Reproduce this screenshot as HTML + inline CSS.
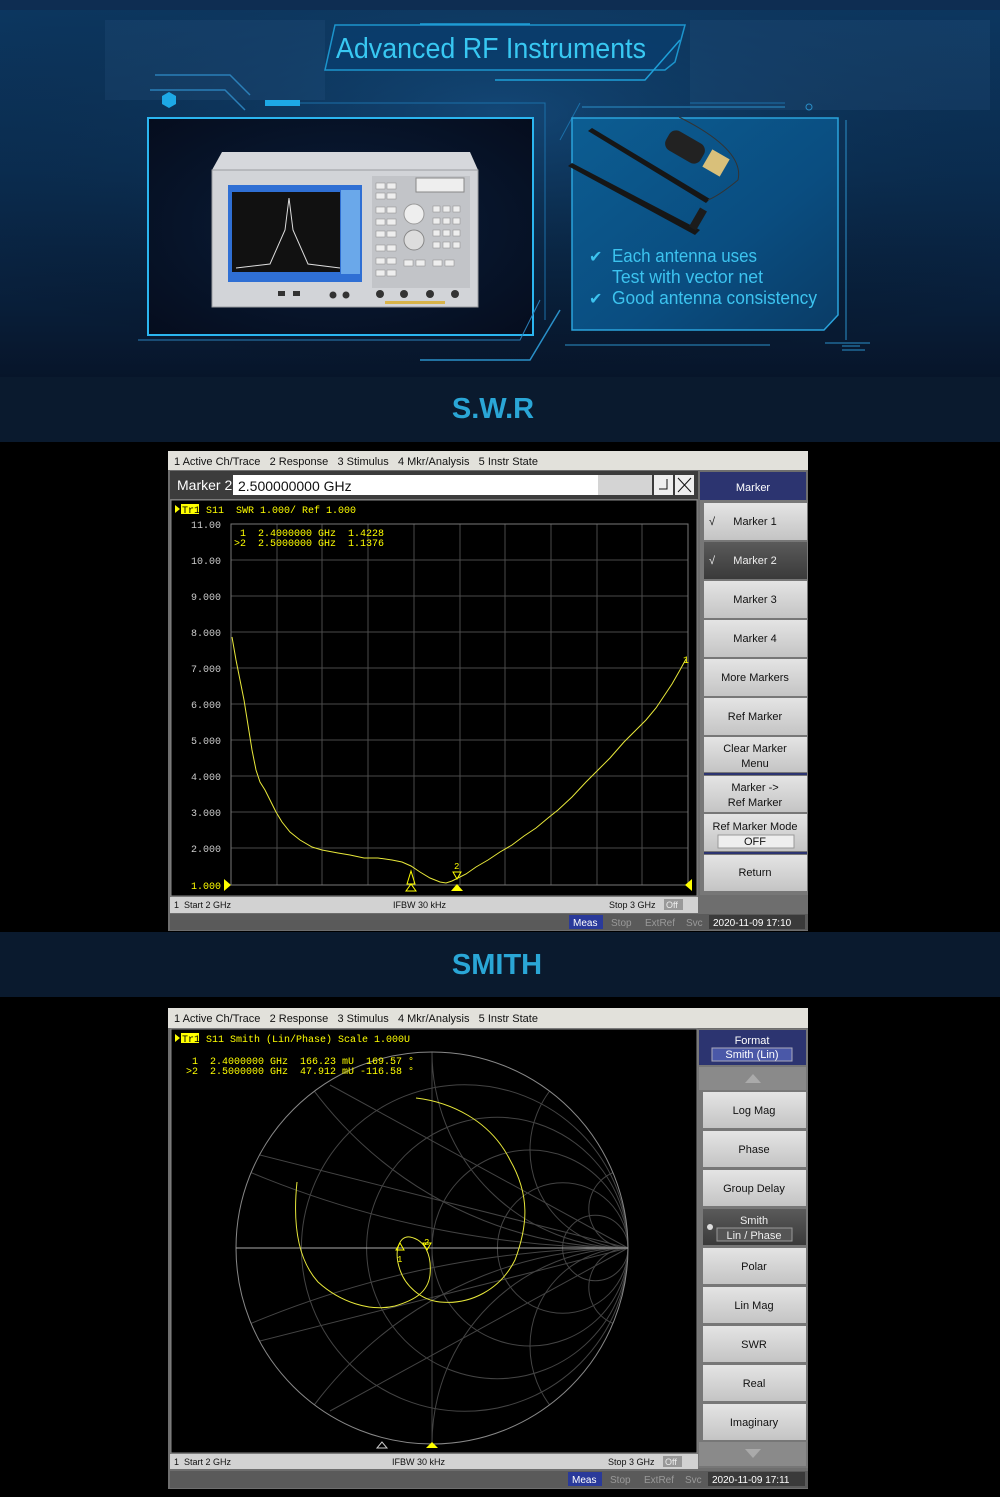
<!DOCTYPE html>
<html><head><meta charset="utf-8"><style>
html,body{margin:0;padding:0;background:#000;width:1000px;height:1497px;overflow:hidden;}
svg{display:block}
text{white-space:pre}
.s{font-family:"Liberation Sans",sans-serif}
.m{font-family:"Liberation Mono",monospace}
</style></head><body>
<svg width="1000" height="1497" viewBox="0 0 1000 1497" xmlns="http://www.w3.org/2000/svg" xml:space="preserve">
<defs>
<linearGradient id="bg" x1="0" y1="0" x2="0" y2="1">
<stop offset="0" stop-color="#0d3b68"/><stop offset="0.45" stop-color="#0b2f55"/><stop offset="1" stop-color="#07152a"/>
</linearGradient>
<radialGradient id="bg2" cx="0.5" cy="0.3" r="0.7"><stop offset="0" stop-color="#1a5a90" stop-opacity="0.5"/><stop offset="1" stop-color="#000" stop-opacity="0"/></radialGradient>
<linearGradient id="rb" x1="0" y1="0" x2="1" y2="1"><stop offset="0" stop-color="#0c5d92"/><stop offset="0.6" stop-color="#0a4d80"/><stop offset="1" stop-color="#0a3c66"/></linearGradient>
<radialGradient id="lb" cx="0.5" cy="0.5" r="0.7"><stop offset="0" stop-color="#0a1e3a"/><stop offset="1" stop-color="#050d1e"/></radialGradient>
<linearGradient id="btn" x1="0" y1="0" x2="0" y2="1"><stop offset="0" stop-color="#e4e4e4"/><stop offset="1" stop-color="#c4c4c4"/></linearGradient>
<linearGradient id="btnd" x1="0" y1="0" x2="0" y2="1"><stop offset="0" stop-color="#5a5a5a"/><stop offset="1" stop-color="#3a3a3a"/></linearGradient>
<clipPath id="sc"><circle cx="432" cy="1248" r="196"/></clipPath>
</defs>

<!-- banner -->
<rect x="0" y="0" width="1000" height="377" fill="url(#bg)"/>
<rect x="0" y="0" width="1000" height="377" fill="url(#bg2)"/>
<rect x="0" y="0" width="1000" height="10" fill="#0e2d52"/>
<g fill="#3a6d9c" opacity="0.15">
<rect x="105" y="20" width="220" height="80"/><rect x="690" y="20" width="300" height="90"/>
</g>
<!-- title frame -->
<path d="M335 25 L685 25 L675 62 L665 70 L325 70 Z" fill="#0a3d6c" stroke="#1e9fd8" stroke-width="1.5" opacity="0.9"/>
<text x="336" y="58" textLength="310" lengthAdjust="spacingAndGlyphs" class="s" font-size="29" fill="#38c8f2">Advanced RF Instruments</text>
<path d="M420 24 L530 24 M495 80 L560 80 L645 80 L680 40" stroke="#1e9fd8" stroke-width="1.5" fill="none"/>
<path d="M150 90 L225 90 L245 110 M155 75 L230 75 L250 95" stroke="#2a7fb8" stroke-width="1.5" fill="none"/>
<polygon points="169,92 176,96 176,104 169,108 162,104 162,96" fill="#1da8e6"/>
<path d="M270 103 L545 103 L545 320 M690 103 L785 103 M580 103 L560 140" stroke="#1b6fa8" stroke-width="1" fill="none"/>
<rect x="265" y="100" width="35" height="6" fill="#1da8e6"/>
<!-- left box -->
<rect x="148" y="118" width="385" height="217" fill="url(#lb)" stroke="#2bb6f0" stroke-width="2"/>
<path d="M138 340 L520 340 L540 300" stroke="#2a7fb8" fill="none"/>
<path d="M420 360 L530 360 L560 310" stroke="#2a90c8" stroke-width="1.5" fill="none"/>
<!-- instrument -->
<polygon points="222,152 470,152 478,170 212,170" fill="#d6d8dc"/>
<rect x="212" y="170" width="266" height="137" fill="#d2d4d8" stroke="#9a9ca0"/>
<rect x="228" y="185" width="134" height="97" fill="#2f6fd4"/>
<rect x="232" y="192" width="108" height="80" fill="#111"/>
<rect x="341" y="190" width="19" height="84" fill="#6aa8ea"/>
<path d="M236 268 L270 264 L285 230 L289 198 L293 230 L308 264 L340 268" stroke="#ddd" stroke-width="1" fill="none"/>
<rect x="372" y="176" width="98" height="112" fill="#c2c4c8"/>
<rect x="416" y="178" width="48" height="14" fill="#eee" stroke="#888"/>
<circle cx="414" cy="214" r="10" fill="#eee" stroke="#999"/>
<circle cx="414" cy="240" r="10" fill="#ddd" stroke="#888"/>
<g fill="#eee" stroke="#888" stroke-width="0.5">
<rect x="376" y="183" width="9" height="6"/><rect x="387" y="183" width="9" height="6"/><rect x="376" y="193" width="9" height="6"/><rect x="387" y="193" width="9" height="6"/>
<rect x="376" y="207" width="9" height="6"/><rect x="387" y="207" width="9" height="6"/><rect x="376" y="219" width="9" height="6"/><rect x="387" y="219" width="9" height="6"/>
<rect x="376" y="231" width="9" height="6"/><rect x="387" y="231" width="9" height="6"/><rect x="376" y="245" width="9" height="6"/><rect x="387" y="245" width="9" height="6"/>
<rect x="376" y="258" width="9" height="6"/><rect x="387" y="258" width="9" height="6"/><rect x="376" y="270" width="9" height="6"/><rect x="387" y="270" width="9" height="6"/>
<rect x="433" y="206" width="7" height="6"/><rect x="443" y="206" width="7" height="6"/><rect x="453" y="206" width="7" height="6"/>
<rect x="433" y="218" width="7" height="6"/><rect x="443" y="218" width="7" height="6"/><rect x="453" y="218" width="7" height="6"/>
<rect x="433" y="230" width="7" height="6"/><rect x="443" y="230" width="7" height="6"/><rect x="453" y="230" width="7" height="6"/>
<rect x="433" y="242" width="7" height="6"/><rect x="443" y="242" width="7" height="6"/><rect x="453" y="242" width="7" height="6"/>
<rect x="404" y="260" width="9" height="6"/><rect x="416" y="260" width="9" height="6"/><rect x="433" y="260" width="9" height="6"/><rect x="445" y="260" width="9" height="6"/>
</g>
<g fill="#333"><circle cx="380" cy="294" r="4"/><circle cx="404" cy="294" r="4"/><circle cx="430" cy="294" r="4"/><circle cx="455" cy="294" r="4"/><circle cx="333" cy="295" r="3.5"/><circle cx="346" cy="295" r="3.5"/><rect x="278" y="291" width="7" height="5"/><rect x="293" y="291" width="7" height="5"/></g>
<rect x="385" y="301" width="60" height="3" fill="#d8b44a"/>
<!-- right box -->
<path d="M572 118 L838 118 L838 315 L824 330 L572 330 Z" fill="url(#rb)" stroke="#2aa3dc" stroke-width="1.5"/>
<path d="M846 120 L846 340 M825 343 L870 343 M842 350 L865 350 M842 346 L860 346 M582 107 L785 107 M565 345 L770 345" stroke="#2a8fc8" stroke-width="1" fill="none"/>
<circle cx="809" cy="107" r="3" fill="none" stroke="#2a8fc8"/>
<!-- antennas -->
<polygon points="588,131 592,128 710,199 706,203" fill="#161616"/>
<polygon points="568,166 572,163 700,230 695,235" fill="#161616"/>
<rect x="694" y="208" width="8" height="22" fill="#1c1c1c" transform="rotate(30 698 219)"/>
<rect x="665" y="136" width="40" height="22" rx="8" fill="#222" transform="rotate(30 685 147)"/>
<rect x="706" y="153" width="20" height="20" fill="#d9c07a" transform="rotate(30 716 163)"/>
<path d="M679 117 Q745 150 738 180 Q720 195 708 200" stroke="#333" fill="none"/>
<g class="s" font-size="18" fill="#3cc3ef">
<text x="589" y="262" font-size="16">✔</text><text x="612" y="262" textLength="145" lengthAdjust="spacingAndGlyphs">Each antenna uses</text>
<text x="612" y="283" textLength="151" lengthAdjust="spacingAndGlyphs">Test with vector net</text>
<text x="589" y="304" font-size="16">✔</text><text x="612" y="304" textLength="205" lengthAdjust="spacingAndGlyphs">Good antenna consistency</text>
</g>

<!-- section bands -->
<rect x="0" y="377" width="1000" height="65" fill="#0a1a2e"/>
<text x="493" y="418" text-anchor="middle" class="s" font-size="29" font-weight="bold" fill="#2aa6d6">S.W.R</text>
<rect x="0" y="442" width="1000" height="490" fill="#000"/>
<rect x="0" y="932" width="1000" height="65" fill="#0a1a2e"/>
<text x="497" y="974" text-anchor="middle" class="s" font-size="29" font-weight="bold" fill="#2aa6d6">SMITH</text>

<!-- ===== SWR screenshot ===== -->
<rect x="168" y="451" width="640" height="480" fill="#6e6e6e"/>
<rect x="168" y="451" width="640" height="19" fill="#e2e1db"/>
<text x="174" y="465" class="s" font-size="11" fill="#111">1 Active Ch/Trace   2 Response   3 Stimulus   4 Mkr/Analysis   5 Instr State</text>
<rect x="170" y="471" width="528" height="28" fill="#3c3c3c"/>
<text x="177" y="490" class="s" font-size="14" fill="#fff">Marker 2</text>
<rect x="233" y="475" width="365" height="20" fill="#fff"/>
<text x="238" y="491" class="s" font-size="14" fill="#111">2.500000000 GHz</text>
<rect x="598" y="475" width="54" height="20" fill="#d4d4d4"/>
<rect x="654" y="475" width="19" height="20" fill="#eee"/><rect x="675" y="475" width="19" height="20" fill="#eee"/>
<path d="M667 479 L667 489 L659 489 M678 478 L691 492 M691 478 L678 492" stroke="#111" fill="none"/>
<rect x="700" y="472" width="106" height="28" fill="#2c3470"/>
<text x="753" y="491" text-anchor="middle" class="s" font-size="11" fill="#fff">Marker</text>
<rect x="171" y="500" width="526" height="396" fill="#000" stroke="#888"/>
<g stroke="#4a4a4a" stroke-width="1">
<path d="M231 524 H688 M231 560 H688 M231 596 H688 M231 632 H688 M231 668 H688 M231 704 H688 M231 740 H688 M231 776 H688 M231 812 H688 M231 848 H688 M231 885 H688"/>
<path d="M231 524 V885 M277 524 V885 M322 524 V885 M368 524 V885 M414 524 V885 M460 524 V885 M505 524 V885 M551 524 V885 M597 524 V885 M642 524 V885 M688 524 V885"/>
</g>
<path d="M231 524 H688 V885 H231 Z" stroke="#777" fill="none"/>
<g class="m" font-size="10" fill="#ccc" text-anchor="end">
<text x="221" y="528">11.00</text><text x="221" y="564">10.00</text><text x="221" y="600">9.000</text><text x="221" y="636">8.000</text><text x="221" y="672">7.000</text><text x="221" y="708">6.000</text><text x="221" y="744">5.000</text><text x="221" y="780">4.000</text><text x="221" y="816">3.000</text><text x="221" y="852">2.000</text><text x="221" y="889" fill="#ff0">1.000</text>
</g>
<polygon points="175,505 180,509 175,513" fill="#ff0"/>
<rect x="181" y="504" width="18" height="10" fill="#ff0"/>
<g class="m" font-size="10" fill="#ff0">
<text x="182" y="513" fill="#000">Tr1</text>
<text x="206" y="513">S11  SWR 1.000/ Ref 1.000</text>
<text x="234" y="536"> 1  2.4000000 GHz  1.4228</text>
<text x="234" y="546">&gt;2  2.5000000 GHz  1.1376</text>
<text x="683" y="663">1</text>
<text x="454" y="869" font-size="9">2</text>
</g>
<polyline fill="none" stroke="#e8e83a" stroke-width="1" points="232,637 236,660 240,680 244,700 248,725 252,750 256,770 260,782 265,790 270,800 276,812 282,822 290,832 300,840 312,847 322,850 338,853 350,855 364,858 378,858 392,860 402,862 411,866 420,872 430,878 440,882 446,883 452,881 458,878 466,874 476,867 488,860 500,852 512,845 524,836 536,828 548,818 558,810 572,797 586,782 598,770 610,758 624,742 636,730 646,720 656,708 664,696 672,684 680,670 686,659"/>
<polygon points="411,871 407,884 415,884" fill="none" stroke="#ff0"/>
<polygon points="411,884 406,891 416,891" fill="none" stroke="#ff0"/>
<polygon points="457,871 453,878 461,878" fill="none" stroke="#ff0" transform="rotate(180 457 875)"/>
<polygon points="457,884 451,891 463,891" fill="#ff0"/>
<polygon points="224,879 231,885 224,891" fill="#ff0"/>
<polygon points="692,879 685,885 692,891" fill="#ff0"/>
<!-- softkeys SWR -->
<rect x="700" y="500" width="108" height="395" fill="#777"/>
<g class="s" font-size="11" fill="#111" text-anchor="middle">
<rect x="704" y="503" width="103" height="37" fill="url(#btn)"/><text x="755" y="525">Marker 1</text><text x="712" y="525">√</text>
<rect x="704" y="542" width="103" height="37" fill="url(#btnd)"/><text x="755" y="564" fill="#eee">Marker 2</text><text x="712" y="564" fill="#eee">√</text>
<rect x="704" y="581" width="103" height="37" fill="url(#btn)"/><text x="755" y="603">Marker 3</text>
<rect x="704" y="620" width="103" height="37" fill="url(#btn)"/><text x="755" y="642">Marker 4</text>
<rect x="704" y="659" width="103" height="37" fill="url(#btn)"/><text x="755" y="681">More Markers</text>
<rect x="704" y="698" width="103" height="37" fill="url(#btn)"/><text x="755" y="720">Ref Marker</text>
<rect x="704" y="737" width="103" height="35" fill="url(#btn)"/><text x="755" y="752">Clear Marker</text><text x="755" y="767">Menu</text>
<rect x="704" y="773" width="103" height="2" fill="#2c3470"/>
<rect x="704" y="776" width="103" height="36" fill="url(#btn)"/><text x="755" y="791">Marker -&gt;</text><text x="755" y="806">Ref Marker</text>
<rect x="704" y="814" width="103" height="37" fill="url(#btn)"/><text x="755" y="830">Ref Marker Mode</text>
<rect x="718" y="835" width="76" height="13" fill="#eee" stroke="#999"/><text x="755" y="845">OFF</text>
<rect x="704" y="852" width="103" height="2" fill="#2c3470"/>
<rect x="704" y="855" width="103" height="36" fill="url(#btn)"/><text x="755" y="876">Return</text>
</g>
<rect x="170" y="897" width="528" height="16" fill="#d2d2d2"/>
<g class="s" font-size="9" fill="#111">
<text x="174" y="908">1  Start 2 GHz</text><text x="393" y="908">IFBW 30 kHz</text><text x="609" y="908">Stop 3 GHz</text>
</g>
<rect x="664" y="899" width="19" height="11" fill="#999"/><text x="666" y="908" class="s" font-size="9" fill="#eee">Off</text>
<rect x="170" y="914" width="638" height="16" fill="#5a5a5a"/>
<rect x="569" y="915" width="34" height="14" fill="#2a3a9a"/>
<g class="s" font-size="10" fill="#999"><text x="573" y="926" fill="#fff">Meas</text><text x="611" y="926">Stop</text><text x="645" y="926">ExtRef</text><text x="686" y="926">Svc</text></g>
<rect x="709" y="915" width="96" height="14" fill="#3a3a3a"/>
<text x="713" y="926" class="s" font-size="10" fill="#fff">2020-11-09 17:10</text>

<!-- ===== SMITH screenshot ===== -->
<rect x="168" y="1008" width="640" height="481" fill="#6e6e6e"/>
<rect x="168" y="1008" width="640" height="20" fill="#e2e1db"/>
<text x="174" y="1022" class="s" font-size="11" fill="#111">1 Active Ch/Trace   2 Response   3 Stimulus   4 Mkr/Analysis   5 Instr State</text>
<rect x="171" y="1029" width="526" height="424" fill="#000" stroke="#888"/>
<g stroke="#444" fill="none" stroke-width="1">
<g clip-path="url(#sc)">
<circle cx="464.7" cy="1248" r="163.3"/><circle cx="497.3" cy="1248" r="130.7"/><circle cx="530" cy="1248" r="98"/><circle cx="562.7" cy="1248" r="65.3"/><circle cx="595.3" cy="1248" r="32.7"/>
<circle cx="628" cy="268" r="980"/><circle cx="628" cy="2228" r="980"/>
<circle cx="628" cy="856" r="392"/><circle cx="628" cy="1640" r="392"/>
<circle cx="628" cy="1052" r="196"/><circle cx="628" cy="1444" r="196"/>
<circle cx="628" cy="1150" r="98"/><circle cx="628" cy="1346" r="98"/>
<circle cx="628" cy="1208.8" r="39.2"/><circle cx="628" cy="1287.2" r="39.2"/>
<path d="M628 1248 L240 1150 M628 1248 L240 1346 M628 1248 L330 1085 M628 1248 L330 1411"/>
<path d="M432 1052 V1444"/>
</g>
<circle cx="432" cy="1248" r="196" stroke="#888"/>
<path d="M236 1248 H628" stroke="#aaa"/>
</g>
<polygon points="175,1034 180,1038 175,1042" fill="#ff0"/>
<rect x="181" y="1033" width="18" height="10" fill="#ff0"/>
<g class="m" font-size="10" fill="#ff0">
<text x="182" y="1042" fill="#000">Tr1</text>
<text x="206" y="1042">S11 Smith (Lin/Phase) Scale 1.000U</text>
<text x="186" y="1064"> 1  2.4000000 GHz  166.23 mU  169.57 °</text>
<text x="186" y="1074">&gt;2  2.5000000 GHz  47.912 mU -116.58 °</text>
<text x="397" y="1262" font-size="9">1</text><text x="424" y="1245" font-size="9">2</text>
</g>
<path fill="none" stroke="#e8e83a" stroke-width="1" d="M416 1098 C450 1102 490 1120 510 1160 C530 1195 528 1225 515 1260 C500 1290 470 1305 440 1302 C420 1300 405 1285 400 1270 C393 1250 400 1235 410 1237 C425 1240 432 1255 430 1275 C428 1292 415 1300 395 1306 C370 1312 340 1302 318 1282 C300 1262 292 1230 297 1182"/>
<polygon points="400,1243 396,1250 404,1250" fill="none" stroke="#ff0"/>
<polygon points="427,1250 423,1243 431,1243" fill="none" stroke="#ff0"/>
<polygon points="382,1442 377,1448 387,1448" fill="none" stroke="#ccc"/>
<polygon points="432,1442 426,1448 438,1448" fill="#ff0"/>
<!-- softkeys smith -->
<rect x="698" y="1029" width="110" height="439" fill="#777"/>
<rect x="699" y="1030" width="107" height="35" fill="#2c3470"/>
<g class="s" font-size="11" fill="#111" text-anchor="middle">
<text x="752" y="1044" fill="#fff">Format</text>
<rect x="712" y="1048" width="80" height="13" fill="#4a58a8" stroke="#aab"/><text x="752" y="1058" fill="#fff">Smith (Lin)</text>
<rect x="699" y="1067" width="107" height="23" fill="#8a8a8a"/>
<polygon points="753,1074 745,1083 761,1083" fill="#aaa"/>
<rect x="703" y="1092" width="103" height="36" fill="url(#btn)"/><text x="754" y="1114">Log Mag</text>
<rect x="703" y="1131" width="103" height="36" fill="url(#btn)"/><text x="754" y="1153">Phase</text>
<rect x="703" y="1170" width="103" height="36" fill="url(#btn)"/><text x="754" y="1192">Group Delay</text>
<rect x="703" y="1209" width="103" height="36" fill="url(#btnd)"/><text x="754" y="1224" fill="#eee">Smith</text>
<rect x="717" y="1228" width="75" height="13" fill="#555" stroke="#999"/><text x="754" y="1239" fill="#eee">Lin / Phase</text>
<circle cx="710" cy="1227" r="3" fill="#ddd"/>
<rect x="703" y="1248" width="103" height="36" fill="url(#btn)"/><text x="754" y="1270">Polar</text>
<rect x="703" y="1287" width="103" height="36" fill="url(#btn)"/><text x="754" y="1309">Lin Mag</text>
<rect x="703" y="1326" width="103" height="36" fill="url(#btn)"/><text x="754" y="1348">SWR</text>
<rect x="703" y="1365" width="103" height="36" fill="url(#btn)"/><text x="754" y="1387">Real</text>
<rect x="703" y="1404" width="103" height="36" fill="url(#btn)"/><text x="754" y="1426">Imaginary</text>
<rect x="699" y="1442" width="107" height="24" fill="#8a8a8a"/>
<polygon points="745,1449 761,1449 753,1458" fill="#aaa"/>
</g>
<rect x="170" y="1454" width="528" height="15" fill="#d2d2d2"/>
<g class="s" font-size="9" fill="#111">
<text x="174" y="1465">1  Start 2 GHz</text><text x="392" y="1465">IFBW 30 kHz</text><text x="608" y="1465">Stop 3 GHz</text>
</g>
<rect x="663" y="1456" width="19" height="11" fill="#999"/><text x="665" y="1465" class="s" font-size="9" fill="#eee">Off</text>
<rect x="170" y="1471" width="638" height="17" fill="#5a5a5a"/>
<rect x="568" y="1472" width="34" height="14" fill="#2a3a9a"/>
<g class="s" font-size="10" fill="#999"><text x="572" y="1483" fill="#fff">Meas</text><text x="610" y="1483">Stop</text><text x="644" y="1483">ExtRef</text><text x="685" y="1483">Svc</text></g>
<rect x="708" y="1472" width="97" height="14" fill="#3a3a3a"/>
<text x="712" y="1483" class="s" font-size="10" fill="#fff">2020-11-09 17:11</text>
</svg>
</body></html>
